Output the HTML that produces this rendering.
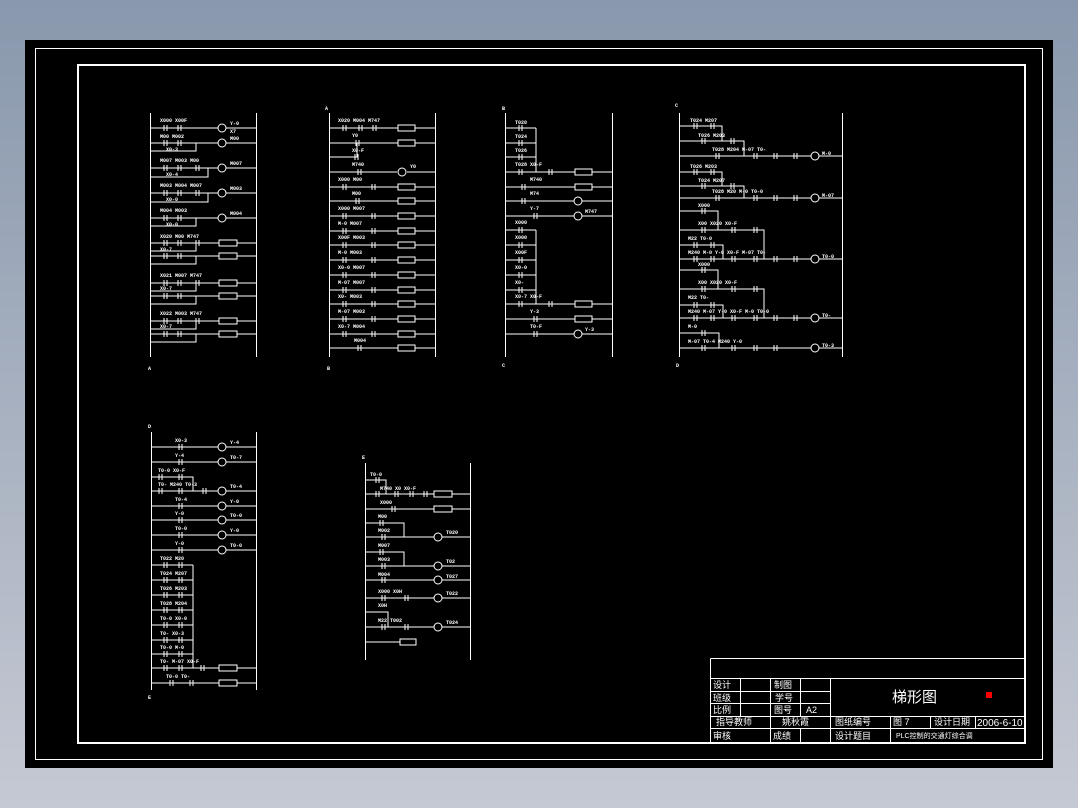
<!DOCTYPE html>
<html><head><meta charset="utf-8"><style>
html,body{margin:0;padding:0}
body{width:1078px;height:808px;overflow:hidden;background:linear-gradient(#8998ad,#c5c9d3);position:relative;font-family:"Liberation Sans","Noto Sans CJK SC",sans-serif}
svg{position:absolute;left:0;top:0}
</style></head><body>
<svg width="1078" height="808" viewBox="0 0 1078 808">
<rect x="25" y="40" width="1028" height="728" fill="#000"/>
<rect x="35.5" y="48.5" width="1007" height="711" fill="none" stroke="#fff" stroke-width="1"/>
<rect x="78" y="65" width="947" height="678" fill="none" stroke="#fff" stroke-width="2"/>
<g stroke="#fff" stroke-width="1" fill="none">
<!-- Ladder 1 -->
<path d="M150.5 113V357M256.5 113V357
M150 128H218M226 128H256 M150 143H218M226 143H256 M150 151H196V143
M150 168H218M226 168H256 M150 177H208V168
M150 193H218M226 193H256 M150 202H208V193
M150 218H218M226 218H256 M150 226H196V218
M150 243H256 M150 251H196V243 M150 256H256 M150 264H196V256
M150 283H256 M150 291H196V283 M150 296H256 M150 304H196V296
M150 321H256 M150 329H196V321 M150 334H256 M150 342H196V334
M164 125V131M167 125V131M178 125V131M181 125V131M164 140V146M167 140V146M178 140V146M181 140V146
M164 165V171M167 165V171M178 165V171M181 165V171M196 165V171M199 165V171
M164 190V196M167 190V196M178 190V196M181 190V196M196 190V196M199 190V196
M164 215V221M167 215V221M178 215V221M181 215V221
M164 240V246M167 240V246M178 240V246M181 240V246M196 240V246M199 240V246
M164 253V259M167 253V259M178 253V259M181 253V259
M164 280V286M167 280V286M178 280V286M181 280V286M196 280V286M199 280V286
M164 293V299M167 293V299M178 293V299M181 293V299
M164 318V324M167 318V324M178 318V324M181 318V324M196 318V324M199 318V324
M164 331V337M167 331V337M178 331V337M181 331V337"/>
<circle cx="222" cy="128" r="4"/><circle cx="222" cy="143" r="4"/><circle cx="222" cy="168" r="4"/><circle cx="222" cy="193" r="4"/><circle cx="222" cy="218" r="4"/>
<g fill="#000"><rect x="219" y="240" width="18" height="6"/><rect x="219" y="253" width="18" height="6"/><rect x="219" y="280" width="18" height="6"/><rect x="219" y="293" width="18" height="6"/><rect x="219" y="318" width="18" height="6"/><rect x="219" y="331" width="18" height="6"/></g>
<!-- Ladder A -->
<path d="M329.5 113V357M435.5 113V357
M329 128H435 M329 143H435 M329 157H357V143 M329 172H397M407 172H435
M329 187H435 M329 201H435 M329 216H435 M329 231H435 M329 245H435 M329 260H435 M329 275H435 M329 290H435 M329 304H435 M329 319H435 M329 334H435 M329 348H435
M343 125V131M346 125V131M359 125V131M362 125V131M373 125V131M376 125V131
M356 140V146M359 140V146M355 154V160M358 154V160M358 169V175M361 169V175
M343 184V190M346 184V190M372 184V190M375 184V190M356 198V204M359 198V204
M343 213V219M346 213V219M372 213V219M375 213V219M343 228V234M346 228V234M372 228V234M375 228V234
M343 242V248M346 242V248M372 242V248M375 242V248M343 257V263M346 257V263M372 257V263M375 257V263
M343 272V278M346 272V278M372 272V278M375 272V278M343 287V293M346 287V293M372 287V293M375 287V293
M343 301V307M346 301V307M372 301V307M375 301V307M343 316V322M346 316V322M372 316V322M375 316V322
M343 331V337M346 331V337M372 331V337M375 331V337M358 345V351M361 345V351"/>
<circle cx="402" cy="172" r="4"/>
<g fill="#000"><rect x="398" y="125" width="17" height="6"/><rect x="398" y="140" width="17" height="6"/><rect x="398" y="184" width="17" height="6"/><rect x="398" y="198" width="17" height="6"/><rect x="398" y="213" width="17" height="6"/><rect x="398" y="228" width="17" height="6"/><rect x="398" y="242" width="17" height="6"/><rect x="398" y="257" width="17" height="6"/><rect x="398" y="272" width="17" height="6"/><rect x="398" y="287" width="17" height="6"/><rect x="398" y="301" width="17" height="6"/><rect x="398" y="316" width="17" height="6"/><rect x="398" y="331" width="17" height="6"/><rect x="398" y="345" width="17" height="6"/></g>
<!-- Ladder B -->
<path d="M505.5 113V357M612.5 113V357
M505 128H536 M505 143H536 M505 157H536 M536 128V172 M505 172H612 M505 187H612 M505 201H574M582 201H612 M505 216H574M582 216H612
M505 230H536 M505 245H536 M505 260H536 M505 275H536 M505 290H536 M536 230V304 M505 304H612 M505 319H612 M505 334H574M582 334H612
M519 125V131M522 125V131M519 140V146M522 140V146M519 154V160M522 154V160M519 169V175M522 169V175M549 169V175M552 169V175
M522 184V190M525 184V190M522 198V204M525 198V204M534 213V219M537 213V219
M519 227V233M522 227V233M519 242V248M522 242V248M519 257V263M522 257V263M519 272V278M522 272V278M519 287V293M522 287V293M519 301V307M522 301V307M549 301V307M552 301V307
M534 316V322M537 316V322M534 331V337M537 331V337"/>
<circle cx="578" cy="201" r="4"/><circle cx="578" cy="216" r="4"/><circle cx="578" cy="334" r="4"/>
<g fill="#000"><rect x="575" y="169" width="17" height="6"/><rect x="575" y="184" width="17" height="6"/><rect x="575" y="301" width="17" height="6"/><rect x="575" y="316" width="17" height="6"/></g>
<!-- Ladder C -->
<path d="M679.5 113V357M842.5 113V357
M679 126H722V141 M679 141H744V156 M679 156H811M819 156H842
M679 172H722V186 M679 186H744V198 M679 198H811M819 198H842
M679 211H718V230 M679 230H764V259 M679 245H723V259 M679 259H811M819 259H842
M679 270H718V289 M679 289H764V318 M679 305H723V318 M679 318H811M819 318H842
M679 333H719V348 M679 348H811M819 348H842
M694 123V129M697 123V129M711 123V129M714 123V129M702 138V144M705 138V144M731 138V144M734 138V144
M716 153V159M719 153V159M754 153V159M757 153V159M774 153V159M777 153V159M794 153V159M797 153V159
M694 169V175M697 169V175M711 169V175M714 169V175M702 183V189M705 183V189M731 183V189M734 183V189
M716 195V201M719 195V201M754 195V201M757 195V201M774 195V201M777 195V201M794 195V201M797 195V201
M702 208V214M705 208V214M702 227V233M705 227V233M732 227V233M735 227V233M754 227V233M757 227V233
M694 242V248M697 242V248M711 242V248M714 242V248M694 256V262M697 256V262M711 256V262M714 256V262M732 256V262M735 256V262M754 256V262M757 256V262M774 256V262M777 256V262M794 256V262M797 256V262
M702 267V273M705 267V273M702 286V292M705 286V292M732 286V292M735 286V292M754 286V292M757 286V292
M694 302V308M697 302V308M711 302V308M714 302V308M694 315V321M697 315V321M711 315V321M714 315V321M732 315V321M735 315V321M754 315V321M757 315V321M774 315V321M777 315V321M794 315V321M797 315V321
M702 330V336M705 330V336M702 345V351M705 345V351M732 345V351M735 345V351M754 345V351M757 345V351M774 345V351M777 345V351"/>
<circle cx="815" cy="156" r="4"/><circle cx="815" cy="198" r="4"/><circle cx="815" cy="259" r="4"/><circle cx="815" cy="318" r="4"/><circle cx="815" cy="348" r="4"/>
<!-- Ladder D -->
<path d="M151.5 432V690M256.5 432V690
M151 447H218M226 447H256 M151 462H218M226 462H256 M151 477H193V491 M151 491H218M226 491H256
M151 506H218M226 506H256 M151 520H218M226 520H256 M151 535H218M226 535H256 M151 550H218M226 550H256
M151 565H193 M151 580H193 M151 595H193 M151 610H193 M151 625H193 M151 640H193 M151 654H193 M193 565V668 M151 668H256 M151 683H256
M179 444V450M182 444V450M179 459V465M182 459V465M159 474V480M162 474V480M179 474V480M182 474V480
M159 488V494M162 488V494M179 488V494M182 488V494M203 488V494M206 488V494
M179 503V509M182 503V509M179 517V523M182 517V523M179 532V538M182 532V538M179 547V553M182 547V553
M164 562V568M167 562V568M179 562V568M182 562V568M164 577V583M167 577V583M179 577V583M182 577V583
M164 592V598M167 592V598M179 592V598M182 592V598M164 607V613M167 607V613M179 607V613M182 607V613
M164 622V628M167 622V628M179 622V628M182 622V628M164 637V643M167 637V643M179 637V643M182 637V643
M164 651V657M167 651V657M179 651V657M182 651V657M164 665V671M167 665V671M179 665V671M182 665V671M201 665V671M204 665V671
M170 680V686M173 680V686M190 680V686M193 680V686"/>
<circle cx="222" cy="447" r="4"/><circle cx="222" cy="462" r="4"/><circle cx="222" cy="491" r="4"/><circle cx="222" cy="506" r="4"/><circle cx="222" cy="520" r="4"/><circle cx="222" cy="535" r="4"/><circle cx="222" cy="550" r="4"/>
<g fill="#000"><rect x="219" y="665" width="18" height="6"/><rect x="219" y="680" width="18" height="6"/></g>
<!-- Ladder E -->
<path d="M365.5 463V660M470.5 463V660
M365 480H386V494 M365 494H470 M365 509H470 M365 523H404V537 M365 537H434M442 537H470 M365 552H404V566 M365 566H434M442 566H470
M365 580H434M442 580H470 M365 598H434M442 598H470 M365 612H388V627 M365 627H434M442 627H470 M365 642H400
M376 477V483M379 477V483M376 491V497M379 491V497M395 491V497M398 491V497M410 491V497M413 491V497M424 491V497M427 491V497
M392 506V512M395 506V512M380 520V526M383 520V526M382 534V540M385 534V540M380 549V555M383 549V555M382 563V569M385 563V569
M382 577V583M385 577V583M382 595V601M385 595V601M405 595V601M408 595V601M382 624V630M385 624V630M405 624V630M408 624V630"/>
<circle cx="438" cy="537" r="4"/><circle cx="438" cy="566" r="4"/><circle cx="438" cy="580" r="4"/><circle cx="438" cy="598" r="4"/><circle cx="438" cy="627" r="4"/>
<g fill="#000"><rect x="434" y="491" width="18" height="6"/><rect x="434" y="506" width="18" height="6"/><rect x="400" y="639" width="16" height="6"/></g>
</g>
<!-- labels -->
<g fill="#fff" font-size="5" font-family="Liberation Mono,monospace" font-weight="bold">
<text x="325" y="110">A</text><text x="502" y="110">B</text><text x="675" y="107">C</text>
<text x="148" y="370">A</text><text x="327" y="370">B</text><text x="502" y="367">C</text><text x="676" y="367">D</text>
<text x="148" y="428">D</text><text x="148" y="699">E</text><text x="362" y="459">E</text>
<text x="160" y="122">X000 X00F</text><text x="160" y="138">M00 M002</text><text x="166" y="151">X0-3</text>
<text x="160" y="162">M007 M003 M00</text><text x="166" y="176">X0-4</text><text x="160" y="187">M003 M004 M007</text><text x="166" y="201">X0-0</text><text x="160" y="212">M004 M003</text><text x="166" y="226">X0-0</text>
<text x="160" y="238">X020 M00 M747</text><text x="160" y="251">X0-7</text><text x="160" y="277">X021 M007 M747</text><text x="160" y="290">X0-7</text><text x="160" y="315">X022 M003 M747</text><text x="160" y="328">X0-7</text>
<text x="230" y="125">Y-0</text><text x="230" y="133">X7</text><text x="230" y="140">M00</text><text x="230" y="165">M007</text><text x="230" y="190">M003</text><text x="230" y="215">M004</text>
<text x="338" y="122">X020 M004 M747</text><text x="352" y="137">Y0</text><text x="352" y="152">X0-F</text><text x="352" y="166">M740</text>
<text x="338" y="181">X000    M00</text><text x="352" y="195">M00</text><text x="338" y="210">X000    M007</text><text x="338" y="225">M-0     M007</text><text x="338" y="239">X00F    M003</text><text x="338" y="254">M-0     M003</text><text x="338" y="269">X0-0    M007</text><text x="338" y="284">M-07    M007</text><text x="338" y="298">X0-     M003</text><text x="338" y="313">M-07    M003</text><text x="338" y="328">X0-7    M004</text><text x="354" y="342">M004</text><text x="410" y="168">Y0</text>
<text x="515" y="124">T020</text><text x="515" y="138">T024</text><text x="515" y="152">T026</text><text x="515" y="166">T028   X0-F</text><text x="530" y="181">M740</text><text x="530" y="195">M74</text><text x="530" y="210">Y-7</text><text x="585" y="213">M747</text>
<text x="515" y="224">X000</text><text x="515" y="239">X000</text><text x="515" y="254">X00F</text><text x="515" y="269">X0-0</text><text x="515" y="284">X0-</text><text x="515" y="298">X0-7   X0-F</text><text x="530" y="313">Y-3</text><text x="530" y="328">T0-F</text><text x="585" y="331">Y-3</text>
<text x="690" y="122">T024 M207</text><text x="698" y="137">T026    M203</text><text x="712" y="151">T028    M204 M-07 T0-</text><text x="690" y="168">T026 M203</text><text x="698" y="182">T024    M207</text><text x="712" y="193">T028    M20 M-0 T0-0</text>
<text x="698" y="207">X000</text><text x="698" y="225">X00  X020  X0-F</text><text x="688" y="240">M22 T0-0</text><text x="688" y="254">M240 M-0 Y-0 X0-F M-07 T0-</text>
<text x="698" y="266">X000</text><text x="698" y="284">X00  X020  X0-F</text><text x="688" y="299">M22 T0-</text><text x="688" y="313">M240 M-07 Y-0 X0-F M-0 T0-0</text>
<text x="688" y="328">M-0</text><text x="688" y="343">M-07  T0-4 M240 Y-0</text>
<text x="822" y="155">M-0</text><text x="822" y="197">M-07</text><text x="822" y="258">T0-0</text><text x="822" y="317">T0-</text><text x="822" y="347">T0-3</text>
<text x="175" y="442">X0-3</text><text x="175" y="457">Y-4</text><text x="158" y="472">T0-0 X0-F</text><text x="158" y="486">T0- M240 T0-3</text><text x="175" y="501">T0-4</text><text x="175" y="515">Y-0</text><text x="175" y="530">T0-0</text><text x="175" y="545">Y-0</text>
<text x="230" y="444">Y-4</text><text x="230" y="459">T0-7</text><text x="230" y="488">T0-4</text><text x="230" y="503">Y-0</text><text x="230" y="517">T0-0</text><text x="230" y="532">Y-0</text><text x="230" y="547">T0-0</text>
<text x="160" y="560">T022 M20</text><text x="160" y="575">T024 M207</text><text x="160" y="590">T026 M203</text><text x="160" y="605">T028 M204</text><text x="160" y="620">T0-0 X0-0</text><text x="160" y="635">T0- X0-3</text><text x="160" y="649">T0-0 M-0</text><text x="160" y="663">T0- M-07 X0-F</text><text x="166" y="678">T0-0 T0-</text>
<text x="370" y="476">T0-0</text><text x="380" y="490">M740 X0 X0-F</text><text x="380" y="504">X000</text><text x="378" y="518">M00</text><text x="378" y="532">M002</text><text x="378" y="547">M007</text><text x="378" y="561">M003</text><text x="378" y="576">M004</text><text x="378" y="593">X000  X0H</text><text x="378" y="607">X0H</text><text x="378" y="622">M22   T002</text>
<text x="446" y="534">T020</text><text x="446" y="563">T02</text><text x="446" y="578">T027</text><text x="446" y="595">T022</text><text x="446" y="624">T024</text>
</g>
<!-- title block -->
<g stroke="#fff" stroke-width="1" fill="none">
<path d="M710.5 658.5H1025M710.5 658.5V743M710 678.5H1025M710 691.5H830M710 703.5H830M710 716.5H1025M710 728.5H1025
M740.5 678V716M770.5 678V716M800.5 678V716M830.5 678V743M770.5 716V743M800.5 728V743M890.5 716V743M930.5 716V728M975.5 716V728"/>
</g>
<g fill="#fff" font-size="9" font-family="Liberation Sans,Noto Sans CJK SC,sans-serif">
<text x="713" y="688">设计</text><text x="713" y="701">班级</text><text x="713" y="713">比例</text>
<text x="774" y="688">制图</text><text x="775" y="701">学号</text><text x="774" y="713">图号</text><text x="806" y="713">A2</text>
<text x="716" y="725">指导教师</text><text x="782" y="725">姚秋霞</text>
<text x="713" y="739">审核</text><text x="773" y="739">成绩</text>
<text x="835" y="725">图纸编号</text><text x="893" y="725">图 7</text><text x="934" y="725">设计日期</text>
<text x="835" y="739">设计题目</text><text x="896" y="738" font-size="7">PLC控制的交通灯综合调</text>
<text x="977" y="726" font-size="10">2006-6-10</text>
<text x="892" y="702" font-size="15">梯形图</text>
</g>
<rect x="986" y="692" width="6" height="6" fill="#f00"/>
</svg>
</body></html>
